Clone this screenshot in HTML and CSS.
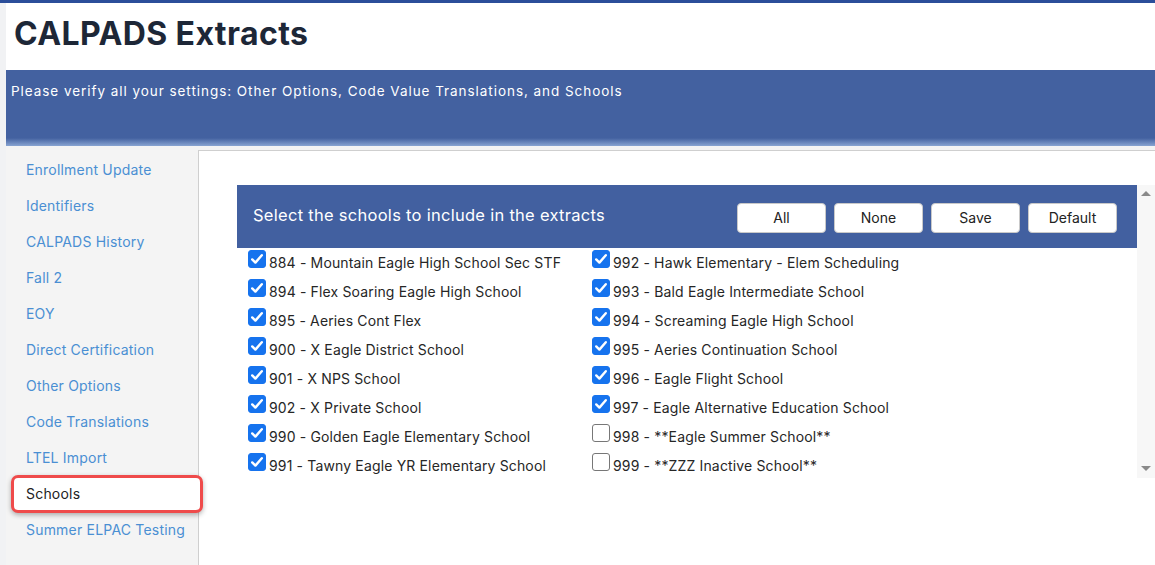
FILE: index.html
```html
<!DOCTYPE html>
<html lang="en">

<head>
    <meta charset="UTF-8">
    <title>CALPADS Extracts</title>
    <link rel="stylesheet" href="styles.css">
</head>

<body>
    <div class="page">
        <h1 class="page-title">CALPADS Extracts</h1>
        <div class="banner">Please verify all your settings: Other Options, Code Value Translations, and Schools</div>

        <div class="main">
            <ul class="side-nav">
                <li>Enrollment Update</li>
                <li>Identifiers</li>
                <li>CALPADS History</li>
                <li>Fall 2</li>
                <li>EOY</li>
                <li>Direct Certification</li>
                <li>Other Options</li>
                <li>Code Translations</li>
                <li>LTEL Import</li>
                <li class="active">Schools</li>
                <li>Summer ELPAC Testing</li>
            </ul>

            <div class="content">
                <div class="school-box">
                    <div class="school-inner">
                        <div class="school-head">
                            <span class="school-head-title">Select the schools to include in the extracts</span>
                            <div class="head-buttons">
                                <button>All</button>
                                <button>None</button>
                                <button>Save</button>
                                <button>Default</button>
                            </div>
                        </div>
                        <div class="school-list" id="school-list"></div>
                    </div>
                    <div class="fake-scroll">
                        <span class="arrow-up"></span>
                        <span class="arrow-down"></span>
                    </div>
                </div>
            </div>
        </div>
    </div>

    <script>
        // columnas: primero la izquierda, luego la derecha
        const schools = [
            ["884 - Mountain Eagle High School Sec STF", true],
            ["992 - Hawk Elementary - Elem Scheduling", true],
            ["894 - Flex Soaring Eagle High School", true],
            ["993 - Bald Eagle Intermediate School", true],
            ["895 - Aeries Cont Flex", true],
            ["994 - Screaming Eagle High School", true],
            ["900 - X Eagle District School", true],
            ["995 - Aeries Continuation School", true],
            ["901 - X NPS School", true],
            ["996 - Eagle Flight School", true],
            ["902 - X Private School", true],
            ["997 - Eagle Alternative Education School", true],
            ["990 - Golden Eagle Elementary School", true],
            ["998 - **Eagle Summer School**", false],
            ["991 - Tawny Eagle YR Elementary School", true],
            ["999 - **ZZZ Inactive School**", false]
        ];

        const list = document.getElementById('school-list');
        const check = '<svg viewBox="0 0 18 18" width="18" height="18"><path d="M4.2 9.4 L7.4 12.6 L13.8 5.2" fill="none" stroke="#fff" stroke-width="2.4" stroke-linecap="round" stroke-linejoin="round"/></svg>';

        schools.forEach(([name, on]) => {
            const row = document.createElement('label');
            row.className = 'school-row';
            row.innerHTML = `<span class="box ${on ? 'checked' : ''}">${on ? check : ''}</span><span>${name}</span>`;
            list.appendChild(row);
        });
    </script>
</body>

</html>
```

FILE: styles.css
```css
body {
    margin: 0;
    font-family: Inter, "Open Sans", sans-serif;
    background-color: #f1f2f4;
    border-top: 3px solid #2b4e9a;
    height: 562px;
    overflow: hidden;
}

.page {
    margin-left: 6px;
    background: #fff;
    height: 100%;
    display: flex;
    flex-direction: column;
}

.page-title {
    margin: 0;
    height: 67px;
    box-sizing: border-box;
    padding: 11px 0 0 8px;
    font-size: 32px;
    font-weight: 700;
    color: #1d2737;
    letter-spacing: 0.4px;
}

.banner {
    height: 76px;
    box-sizing: border-box;
    padding: 13px 5px 0;
    background: linear-gradient(to bottom, #4361a0 0, #4361a0 68px, #88a4d2 76px);
    color: #fff;
    font-size: 13.5px;
    letter-spacing: 0.95px;
}

.main {
    flex: 1;
    display: flex;
    background: #f4f4f4;
}

/* Menu lateral */
.side-nav {
    list-style: none;
    margin: 0;
    padding: 6px 0 0;
    width: 192px;
    flex-shrink: 0;
    box-sizing: border-box;
}

.side-nav li {
    height: 36px;
    line-height: 36px;
    padding-left: 20px;
    font-size: 14px;
    letter-spacing: 0.2px;
    color: #4a8fd3;
}

.side-nav li.active {
    position: relative;
    z-index: 1;
    height: 38px;
    line-height: 32px;
    margin: -1px -5px -1px 5px;
    padding-left: 12px;
    box-sizing: border-box;
    background: #fff;
    color: #222;
    border: 3px solid #ef4b4b;
    border-radius: 7px;
    box-shadow: 0 2px 5px rgba(0, 0, 0, 0.3);
}

.content {
    flex: 1;
    margin-top: 4px;
    background: #fff;
    border-top: 1px solid #cfcfcf;
    border-left: 1px solid #cfcfcf;
    padding: 34px 0 0 38px;
}

.school-box {
    display: flex;
    height: 293px;
}

.school-inner {
    flex: 1;
}

.school-head {
    height: 63px;
    background: #4260a0;
    display: flex;
    align-items: center;
    justify-content: space-between;
    padding: 0 20px 0 16px;
}

.school-head-title {
    color: #fff;
    font-size: 16.5px;
    letter-spacing: 0.28px;
    margin-top: -4px;
}

.head-buttons {
    display: flex;
    gap: 8px;
    margin-top: 2px;
}

.head-buttons button {
    width: 89px;
    height: 30px;
    background: #fff;
    border: 1px solid #c9c9c9;
    border-radius: 4px;
    font-family: inherit;
    font-size: 14px;
    color: #222;
}

.school-list {
    display: grid;
    grid-template-columns: 344px 1fr;
    padding-left: 11px;
}

.school-row {
    display: flex;
    align-items: flex-start;
    height: 29px;
    line-height: 29px;
    font-size: 14px;
    letter-spacing: 0.15px;
    color: #262626;
}

.box {
    width: 16px;
    height: 16px;
    margin: 2px 3px 0 0;
    border: 1px solid #777;
    border-radius: 3px;
    background: #fff;
    flex-shrink: 0;
    display: flex;
}

.box.checked {
    background: #1673ee;
    border-color: #1673ee;
}

.box svg {
    margin: -1px;
}

.fake-scroll {
    width: 18px;
    background: #f7f7f7;
    position: relative;
}

.arrow-up,
.arrow-down {
    position: absolute;
    left: 4px;
    width: 0;
    height: 0;
    border-left: 5px solid transparent;
    border-right: 5px solid transparent;
}

.arrow-up {
    top: 6px;
    border-bottom: 5px solid #8a8a8a;
}

.arrow-down {
    bottom: 7px;
    border-top: 5px solid #8a8a8a;
}
```
